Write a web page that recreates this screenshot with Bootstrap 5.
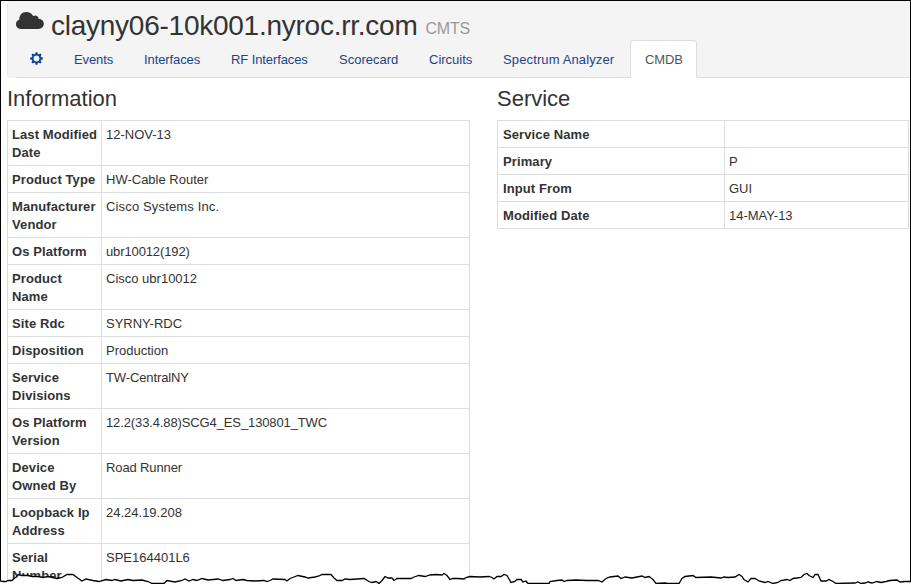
<!DOCTYPE html>
<html lang="en">
<head>
<meta charset="utf-8">
<meta name="viewport" content="width=device-width, initial-scale=1">
<title>clayny06-10k001.nyroc.rr.com</title>
<link rel="stylesheet" href="https://cdn.jsdelivr.net/npm/bootstrap@5.3.0/dist/css/bootstrap.min.css">
<style>
body{font-family:"Liberation Sans",Arial,sans-serif;font-size:13px;line-height:18px;color:#333;background:#fff}
.frame{height:584px;border:1px solid #000;border-bottom:0}
.device-head{margin-left:6px;height:77px;background:#f4f4f4;border-left:1px solid #e8e8e8;border-radius:4px 0 0 4px;padding-left:8px}
.device-title{font-size:28px;line-height:40px;height:39px;letter-spacing:-.25px;padding-top:5px;font-weight:400;color:#333}
.device-title svg{margin:4px 7px 0 0}
.device-title small{font-size:16px;letter-spacing:-.2px;color:#999;margin-left:8px;position:relative;top:3px;line-height:40px}
.device-tabs{--bs-nav-tabs-border-color:#ddd;--bs-nav-link-color:#08c;height:38px}
.device-tabs .nav-link{padding:10px 0 8px 14px;height:38px;line-height:18px;color:#1c4389;border-radius:4px 4px 0 0;white-space:nowrap;letter-spacing:-.1px}
.device-tabs .nav-link.active{color:#555;border-color:#ddd #ddd #fff;background:#fff}
.t-gear{width:43px}.t-events{width:70px}.t-inter{width:87px}.t-rf{width:108px}.t-score{width:90px}.t-circ{width:74px}.t-spec{width:142px}.t-cmdb{width:67px}
.device-tabs .t-spec{letter-spacing:.13px}
.device-tabs .t-score,.device-tabs .t-circ{letter-spacing:0}
.device-tabs .t-gear{padding-left:13px}
.panes{margin-left:6px}
.pane-info{width:463px}
.pane-service{width:412px;margin-left:27px}
.pane-title{font-size:22px;line-height:40px;height:42px;padding-top:1px;font-weight:400;margin:0}
.facts{table-layout:fixed;color:#333;border-color:#ddd;margin:0;border-collapse:collapse}
.facts>tbody>tr>*{padding:5px 4px 3px 4px;line-height:18px;border:1px solid #ddd;color:#333;height:27px}
.facts th{letter-spacing:.1px}
.facts .tight{letter-spacing:-.12px}
.facts .loose{letter-spacing:.15px}
.pane-info th{width:94px;white-space:nowrap}
.pane-service th{width:227px}
.pane-service .facts>tbody>tr>th{padding-left:5px}
.torn{left:0;bottom:0;z-index:2}
</style>
</head>
<body class="overflow-hidden">
<div class="frame overflow-hidden">
  <header class="device-head">
    <h1 class="device-title d-flex align-items-start m-0">
      <svg width="28" height="20" viewBox="0 0 28 20" fill="#333"><path d="M5.500 19C2.300 19 0 17 0 14.200c0-2.400 1.300-3.900 3.400-4.400C2.900 5.500 6 2 10.300 2c3.200 0 5.500 1.500 6.800 4.100 2.400-1.700 5.500-.2 5.500 2.700 3.200.2 5.200 2.200 5.200 5 0 3-2.300 5.200-5.500 5.200z"/></svg>
      <span>clayny06-10k001.nyroc.rr.com</span><small>CMTS</small>
    </h1>
    <nav class="nav nav-tabs device-tabs flex-nowrap">
      <a class="nav-link t-gear" href="#" aria-label="Settings"><svg class="d-block" width="13" height="15" viewBox="-6.500 -7.500 13 15"><g fill="#08439a"><circle r="4.700"/><path id="teeth" d="M-.9-6.300h1.800l.5 2.300h-2.800zM-.9 6.300h1.800l.5-2.300h-2.800zM-6.300-.9v1.800l2.300.5v-2.800zM6.300-.9v1.800l-2.300.5v-2.800z"/><use href="#teeth" transform="rotate(45)"/></g><circle r="2.900" fill="#f4f4f4"/></svg></a>
      <a class="nav-link t-events" href="#">Events</a>
      <a class="nav-link t-inter" href="#">Interfaces</a>
      <a class="nav-link t-rf" href="#">RF Interfaces</a>
      <a class="nav-link t-score" href="#">Scorecard</a>
      <a class="nav-link t-circ" href="#">Circuits</a>
      <a class="nav-link t-spec" href="#">Spectrum Analyzer</a>
      <a class="nav-link t-cmdb active" href="#">CMDB</a>
    </nav>
  </header>
  <main class="panes d-flex align-items-start">
    <section class="pane-info flex-shrink-0">
      <h2 class="pane-title">Information</h2>
      <table class="table table-bordered facts"><tbody>
        <tr><th>Last Modified<br>Date</th><td>12-NOV-13</td></tr>
        <tr><th>Product Type</th><td>HW-Cable Router</td></tr>
        <tr><th>Manufacturer<br>Vendor</th><td class="loose">Cisco Systems Inc.</td></tr>
        <tr><th>Os Platform</th><td class="tight">ubr10012(192)</td></tr>
        <tr><th>Product<br>Name</th><td>Cisco ubr10012</td></tr>
        <tr><th>Site Rdc</th><td>SYRNY-RDC</td></tr>
        <tr><th>Disposition</th><td>Production</td></tr>
        <tr><th>Service<br>Divisions</th><td class="tight">TW-CentralNY</td></tr>
        <tr><th>Os Platform<br>Version</th><td class="tight">12.2(33.4.88)SCG4_ES_130801_TWC</td></tr>
        <tr><th>Device<br>Owned By</th><td class="tight">Road Runner</td></tr>
        <tr><th>Loopback Ip<br>Address</th><td>24.24.19.208</td></tr>
        <tr><th>Serial<br>Number</th><td>SPE164401L6</td></tr>
      </tbody></table>
    </section>
    <section class="pane-service flex-shrink-0">
      <h2 class="pane-title">Service</h2>
      <table class="table table-bordered facts"><tbody>
        <tr><th>Service Name</th><td></td></tr>
        <tr><th>Primary</th><td>P</td></tr>
        <tr><th>Input From</th><td>GUI</td></tr>
        <tr><th>Modified Date</th><td>14-MAY-13</td></tr>
      </tbody></table>
    </section>
  </main>
</div>
<!-- Torn page edge laid over the bottom of the listing -->
<svg class="torn position-absolute" width="911" height="14" viewBox="0 570 911 14">
<path fill="#fff" stroke="#000" stroke-width="1.300" d="M-2 586V580.500L3 581.500 6 581.500 8 580.500 12 580.500 14 578.500 17 576.500 18 574.500 22 575.500 28 575.500 32 576.500 38 576.500 43 577.500 48 576.500 57 578.500 62 577.500 67 574.500 73 574.500 77 577.500 82 581 86 579 93 580.500 99 581.500 106 579.500 112 580.500 115 579.500 121 581 128 579.500 133 580.500 142 580 148 581.500 152 583.500 164 583.500 167 580.500 175 582 182 580.500 185 579 189 581 193 579.500 197 580.500 202 578.500 208 580 218 579 223 580.500 230 579.500 233 578.500 236 580.500 243 579.500 247 580.500 255 581 264 580.500 267 581.500 270 580.500 273 579 285 579.500 287 581 290 578.500 294 577 298 575.500 305 577 308 578 315 577 319 576 322 574.500 331 574.500 334 578 337 580.500 342 580.500 345 579 350 579.500 364 578.500 369 581.500 372 582.500 376 581.500 379 583.500 382 580.500 385 576.500 388 578 392 578 394 580.500 397 578.500 411 578.500 414 577 419 575.500 425 576.500 430 575 436 574.500 442 575 444 573.500 447 575.500 450 579.500 453 578.500 458 578.500 464 579 466 577.500 470 576.500 480 577 489 576.500 492 577.500 494 579 497 576.500 501 576.500 504 574.500 507 575.500 511 582.500 515 581.500 517 579.500 521 579.500 523 582 526 581 528 583.500 549 583.500 550 581.500 557 580.500 562 580 564 581.500 567 580.500 576 580 587 580.500 598 580.500 602 582 606 578.500 610 577 614 576.500 618 576 621 578.500 625 577 632 578 637 577 642 576 645 577.500 649 576.500 653 579.500 656 583.500 665 583 668 583.500 679 583.500 682 578.500 685 576.500 693 575.500 696 577.500 711 577 716 577.500 721 578 724 577 728 577.500 735 577 739 574.500 742 576.500 744 579.500 748 582 751 578.500 755 578.500 759 581 765 582.500 768 581.500 773 583.500 778 582.500 781 580.500 787 579.500 790 580.500 793 578.500 801 577.500 804 574.500 807 573.500 809 575.500 813 577.500 815 574.500 818 574.500 821 581 826 581 829 579.500 833 581.500 836 583.500 855 583 858 582 861 583.500 865 583 868 582 872 583 877 581.500 881 582.500 886 581.500 890 580.500 897 580 900 582 905 581.500 912 581.500V586Z"/>
</svg>
<script src="https://cdn.jsdelivr.net/npm/bootstrap@5.3.0/dist/js/bootstrap.bundle.min.js"></script>
</body>
</html>
